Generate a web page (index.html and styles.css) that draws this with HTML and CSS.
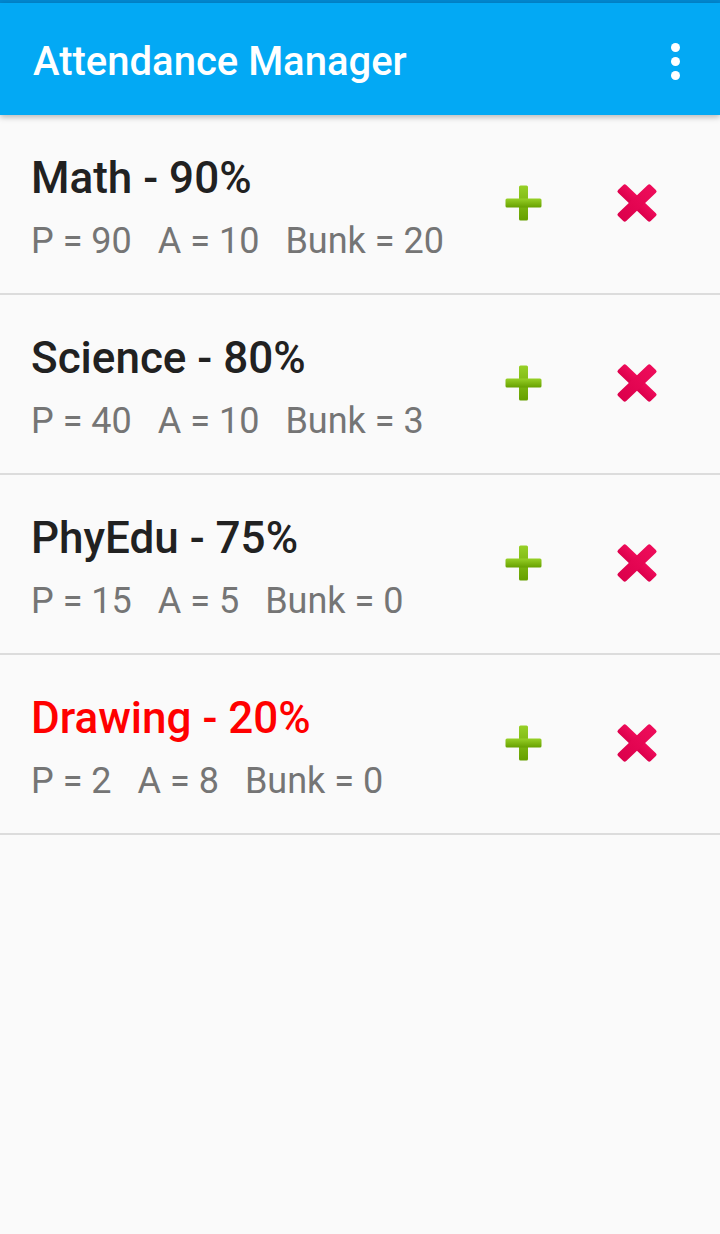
FILE: index.html
```html
<!DOCTYPE html>
<html>
<head>
<meta charset="utf-8">
<link rel="stylesheet" href="styles.css">
</head>
<body>
<svg class="defs" width="0" height="0">
  <defs>
    <linearGradient id="g1" x1="0" y1="0" x2="0" y2="1"><stop offset="0" stop-color="#97d027"/><stop offset="1" stop-color="#66a000"/></linearGradient>
    <linearGradient id="r1" x1="0" y1="0" x2="0" y2="1"><stop offset="0" stop-color="#ee0c5a"/><stop offset="1" stop-color="#dc004c"/></linearGradient>
  </defs>
</svg>
<div class="status"></div>
<header class="appbar">
  <h1 class="title">Attendance Manager</h1>
  <div class="menu"><span></span><span></span><span></span></div>
</header>
<main class="list">
  <div class="row">
    <div class="info">
      <div class="name">Math - 90%</div>
      <div class="stats"><span>P = 90</span><span>A = 10</span><span>Bunk = 20</span></div>
    </div>
    <div class="actions">
      <svg class="plus" viewBox="0 0 37 36"><rect x="14" y="0.5" width="9" height="35" rx="1.5" fill="url(#g1)"/><rect x="0.5" y="13.5" width="36" height="9" rx="1.5" fill="url(#g1)"/></svg>
      <svg class="cross" viewBox="0 0 42 40"><g transform="translate(21 20) scale(1.05 1) rotate(45)"><rect x="-22" y="-5.5" width="44" height="11" rx="2" fill="url(#r1)"/><rect x="-5.5" y="-22" width="11" height="44" rx="2" fill="url(#r1)"/></g></svg>
    </div>
  </div>
  <div class="row">
    <div class="info">
      <div class="name">Science - 80%</div>
      <div class="stats"><span>P = 40</span><span>A = 10</span><span>Bunk = 3</span></div>
    </div>
    <div class="actions">
      <svg class="plus" viewBox="0 0 37 36"><rect x="14" y="0.5" width="9" height="35" rx="1.5" fill="url(#g1)"/><rect x="0.5" y="13.5" width="36" height="9" rx="1.5" fill="url(#g1)"/></svg>
      <svg class="cross" viewBox="0 0 42 40"><g transform="translate(21 20) scale(1.05 1) rotate(45)"><rect x="-22" y="-5.5" width="44" height="11" rx="2" fill="url(#r1)"/><rect x="-5.5" y="-22" width="11" height="44" rx="2" fill="url(#r1)"/></g></svg>
    </div>
  </div>
  <div class="row">
    <div class="info">
      <div class="name">PhyEdu - 75%</div>
      <div class="stats"><span>P = 15</span><span>A = 5</span><span>Bunk = 0</span></div>
    </div>
    <div class="actions">
      <svg class="plus" viewBox="0 0 37 36"><rect x="14" y="0.5" width="9" height="35" rx="1.5" fill="url(#g1)"/><rect x="0.5" y="13.5" width="36" height="9" rx="1.5" fill="url(#g1)"/></svg>
      <svg class="cross" viewBox="0 0 42 40"><g transform="translate(21 20) scale(1.05 1) rotate(45)"><rect x="-22" y="-5.5" width="44" height="11" rx="2" fill="url(#r1)"/><rect x="-5.5" y="-22" width="11" height="44" rx="2" fill="url(#r1)"/></g></svg>
    </div>
  </div>
  <div class="row">
    <div class="info">
      <div class="name low">Drawing - 20%</div>
      <div class="stats"><span>P = 2</span><span>A = 8</span><span>Bunk = 0</span></div>
    </div>
    <div class="actions">
      <svg class="plus" viewBox="0 0 37 36"><rect x="14" y="0.5" width="9" height="35" rx="1.5" fill="url(#g1)"/><rect x="0.5" y="13.5" width="36" height="9" rx="1.5" fill="url(#g1)"/></svg>
      <svg class="cross" viewBox="0 0 42 40"><g transform="translate(21 20) scale(1.05 1) rotate(45)"><rect x="-22" y="-5.5" width="44" height="11" rx="2" fill="url(#r1)"/><rect x="-5.5" y="-22" width="11" height="44" rx="2" fill="url(#r1)"/></g></svg>
    </div>
  </div>
</main>
</body>
</html>
```
FILE: styles.css
```css
html, body {
  margin: 0;
  padding: 0;
  background: #fafafa;
  font-family: Roboto, "Noto Sans", sans-serif;
  height: 1234px;
  overflow: hidden;
}
.defs {
  position: absolute;
  width: 0;
  height: 0;
}
.status {
  height: 3px;
  background: #0288d1;
}
.appbar {
  height: 112px;
  background: #03a9f4;
  display: flex;
  align-items: center;
  justify-content: space-between;
  padding: 0 32px 0 33px;
  box-shadow: 0 2px 6px rgba(0,0,0,0.28);
  position: relative;
  z-index: 1;
}
.title {
  margin: 0;
  padding-top: 6px;
  color: #fff;
  font-size: 40px;
  font-weight: 500;
  line-height: 48px;
}
.menu {
  display: flex;
  flex-direction: column;
  gap: 5px;
  margin-right: 8px;
  margin-top: 4px;
}
.menu span {
  width: 9px;
  height: 9px;
  border-radius: 50%;
  background: #fff;
}
.row {
  height: 178px;
  border-bottom: 2px solid #dcdcdc;
  display: flex;
  align-items: flex-start;
  justify-content: space-between;
  box-sizing: content-box;
}
.info {
  padding: 37px 0 0 31px;
}
.name {
  font-size: 44px;
  font-weight: 500;
  line-height: 52px;
  color: #212121;
}
.name.low {
  color: #ff0000;
}
.stats {
  margin-top: 15px;
  font-size: 36px;
  line-height: 44px;
  color: #757575;
  display: flex;
  gap: 26px;
}
.actions {
  display: flex;
  align-items: center;
  height: 178px;
  padding-right: 62px;
  gap: 74px;
}
.plus {
  width: 37px;
  height: 36px;
  margin-top: -2px;
}
.cross {
  width: 42px;
  height: 40px;
  margin-top: -3px;
}
```
